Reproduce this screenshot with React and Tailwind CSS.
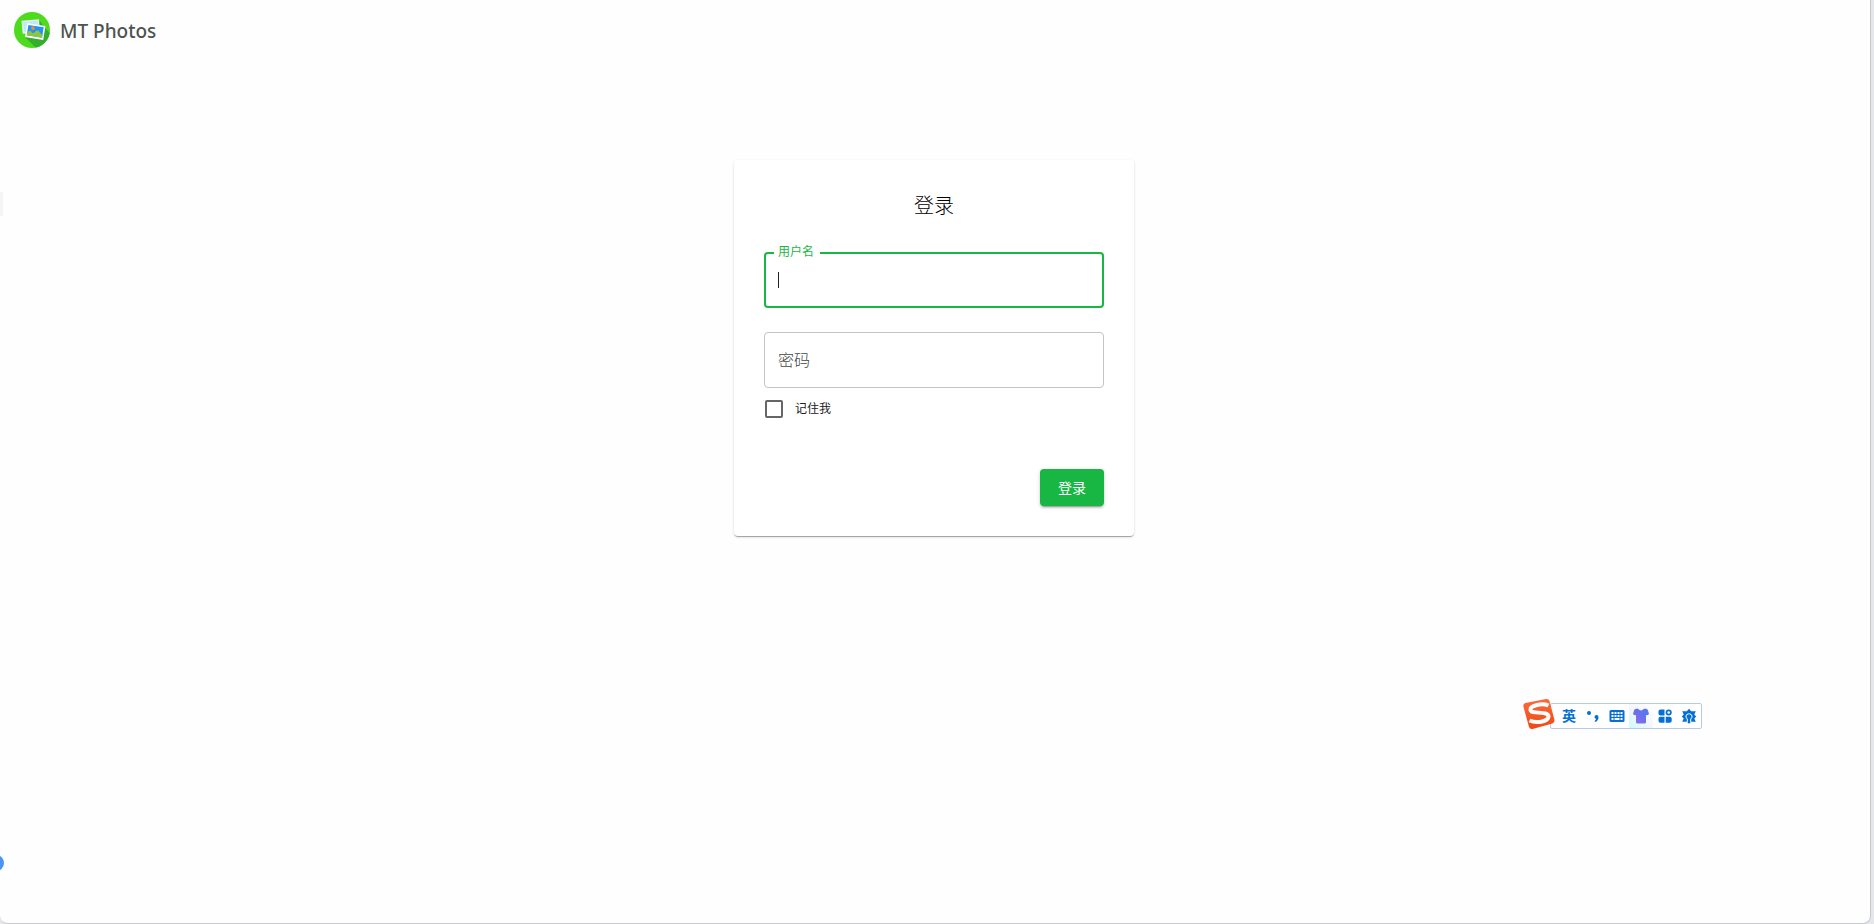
function PhotosLogo() {
  return (
    <svg viewBox="0 0 36 36" className="size-9 shrink-0" aria-hidden="true">
      <defs>
        <clipPath id="disc">
          <circle cx="18" cy="18" r="18" />
        </clipPath>
      </defs>
      <circle cx="18" cy="18" r="18" fill="#4fdb1d" />
      <path d="M26 9 L30 15 L42 27 L30 42 L20 34 L11 25 Z" fill="#33ad2b" clipPath="url(#disc)" />
      <g transform="rotate(-5 16 14)">
        <rect x="8" y="8" width="17.500" height="13" fill="#e6efec" />
        <rect x="9.500" y="9.500" width="14.500" height="10" fill="#b9ecf5" />
        <circle cx="15" cy="12.500" r="1.500" fill="#f3d9bd" />
      </g>
      <g transform="rotate(9 21 19)">
        <rect x="12" y="12.500" width="18.500" height="14" fill="#fff" />
        <rect x="13.500" y="14" width="15.500" height="10.500" fill="#2292f5" />
        <path d="M13.500 21.500 q2.500 -3.500 4.500 -.8 q1.500 1.500 2.500 0 q3 -4.700 5 -1.500 q2 2.300 3.500 2.300 v3 h-15.500 Z" fill="#8cc63f" />
        <circle cx="18.500" cy="16.500" r="1.900" fill="#f58a32" />
      </g>
    </svg>
  );
}

function SogouLogo() {
  return (
    <svg viewBox="0 0 32 32" className="absolute -left-7 -top-1.5 size-8" aria-hidden="true">
      <defs>
        <linearGradient id="sogou" x1="0" y1="0" x2="0" y2="1">
          <stop offset="0" stopColor="#fb6a3c" />
          <stop offset="1" stopColor="#f04a12" />
        </linearGradient>
      </defs>
      <path
        d="M2.500 5 L23 1 Q25.800 .6 26.500 3 L31.500 22 Q31.800 24.800 29.500 25.600 L9.500 31 Q7 31.500 6 29 L.4 8.500 Q0 5.600 2.500 5 Z"
        fill="url(#sogou)"
      />
      <path
        d="M25.500 7.500 C19 4.500 7 7.500 7.500 12 C8 16.500 25.500 12.500 25.500 18.500 C25 24 13 25.500 6.500 22.500"
        fill="none"
        stroke="#fff"
        strokeWidth="4"
      />
    </svg>
  );
}

function PunctuationIcon() {
  return (
    <svg viewBox="0 0 16 16" className="size-4" fill="#066fd6" aria-hidden="true">
      <circle cx="4" cy="5" r="2" />
      <path d="M9.500 9 a2 2 0 1 1 4 0 q0 3.500 -3 5 l-1 -1 q1.500 -1 1.500 -2.200 q-1.500 -.3 -1.500 -1.800 Z" />
    </svg>
  );
}

function KeyboardIcon() {
  return (
    <svg viewBox="0 0 16 16" className="size-4" aria-hidden="true">
      <rect x=".5" y="2" width="15" height="12" rx="1.500" fill="#066fd6" />
      <path
        d="M2.500 4h2v2h-2Zm3 0h2v2h-2Zm3 0h2v2h-2Zm3 0h2v2h-2ZM2.500 7h2v2h-2Zm3 0h2v2h-2Zm3 0h2v2h-2Zm3 0h2v2h-2ZM2.500 10h2v2h-2Zm3 0h5v2h-5Zm6 0h2v2h-2Z"
        fill="#fff"
      />
    </svg>
  );
}

function ShirtIcon() {
  return (
    <svg viewBox="0 0 16 16" className="size-4" aria-hidden="true">
      <defs>
        <linearGradient id="shirt" x1="0" y1="1" x2="1" y2="0">
          <stop offset="0" stopColor="#9a6bd8" />
          <stop offset=".5" stopColor="#6a70ee" />
          <stop offset="1" stopColor="#4b78f5" />
        </linearGradient>
      </defs>
      <path
        d="M3 .8 H5 Q8 4 11 .8 H13 Q14.500 1 15 2.500 L16 6 Q15 7.300 13 7.200 V14 Q13 15.500 11.500 15.500 H4.500 Q3 15.500 3 14 V7.200 Q1 7.300 0 6 L1 2.500 Q1.500 1 3 .8 Z"
        fill="url(#shirt)"
      />
    </svg>
  );
}

function AppsIcon() {
  return (
    <svg viewBox="0 0 16 16" className="size-4" fill="#066fd6" aria-hidden="true">
      <path d="M3.500 1.500 H7.500 V7.500 H3.500 Q1.500 7.500 1.500 5.500 V3.500 Q1.500 1.500 3.500 1.500 Z" />
      <path d="M3.500 8.700 H7.500 V14.700 H3.500 Q1.500 14.700 1.500 12.700 V10.700 Q1.500 8.700 3.500 8.700 Z" />
      <path d="M8.700 8.700 H12.700 Q14.700 8.700 14.700 10.700 V12.700 Q14.700 14.700 12.700 14.700 H8.700 Z" />
      <circle cx="11.700" cy="4.500" r="2.200" fill="none" stroke="#066fd6" strokeWidth="1.700" />
    </svg>
  );
}

function SettingsIcon() {
  return (
    <svg viewBox="0 0 16 16" className="size-4" aria-hidden="true">
      <path
        d="M8 .8 L10.200 3.300 H14.800 L13.300 6.500 L15.200 8.500 L13.300 10.500 L14.800 13.700 H10.200 L8 15.700 L5.800 13.700 H1.200 L2.700 10.500 L.8 8.500 L2.700 6.500 L1.200 3.300 H5.800 Z"
        fill="#066fd6"
      />
      <path
        d="M6.300 14 V11 Q4.800 10 5 8 Q5.400 5.800 8 5.800 Q10.600 5.800 11 8 Q11.200 10 9.700 11 V14"
        fill="none"
        stroke="#fff"
        strokeWidth="1"
      />
      <path d="M7 7 Q8 6 9 7 V15 H7 Z" fill="#066fd6" />
    </svg>
  );
}

function InputMethodBar() {
  return (
    <div
      role="toolbar"
      aria-label="输入法"
      className="fixed right-[172px] bottom-[195px] flex h-[26px] items-center rounded-xs border border-[#b4cbe6] bg-white pl-1.5"
    >
      <SogouLogo />
      <button type="button" className="flex h-6 w-6 items-center justify-center text-sm leading-6 font-bold text-[#066fd6]">英</button>
      <button type="button" aria-label="标点" className="flex h-6 w-6 items-center justify-center"><PunctuationIcon /></button>
      <button type="button" aria-label="键盘" className="flex h-6 w-6 items-center justify-center"><KeyboardIcon /></button>
      <button type="button" aria-label="皮肤" className="flex h-6 w-6 items-center justify-center bg-linear-to-tr from-[#cdfafa] via-[#f4f6ff] to-white"><ShirtIcon /></button>
      <button type="button" aria-label="工具箱" className="flex h-6 w-6 items-center justify-center"><AppsIcon /></button>
      <button type="button" aria-label="设置" className="flex h-6 w-6 items-center justify-center"><SettingsIcon /></button>
    </div>
  );
}

function LoginCard() {
  return (
    <form
      onSubmit={(event) => event.preventDefault()}
      className="flex w-full max-w-[400px] flex-col rounded bg-white px-[30px] pt-8 pb-[30px] shadow-[0_2px_1px_-1px_rgba(0,0,0,0.2),0_1px_1px_0_rgba(0,0,0,0.14),0_1px_3px_0_rgba(0,0,0,0.12)]"
    >
      <h1 className="text-center text-xl leading-7 font-light text-black">登录</h1>

      <div className="relative mt-8 h-14">
        <input
          id="username"
          type="text"
          autoComplete="username"
          className="h-full w-full rounded border-2 border-[#18b643] px-3 text-base caret-transparent outline-none"
        />
        <label htmlFor="username" className="absolute left-2.5 -top-2 bg-white pr-1.5 pl-1 text-xs leading-4 text-[#18b643]">
          用户名
        </label>
        <span className="absolute top-5 left-3.5 h-4 w-px bg-[#212121]" />
      </div>

      <input
        type="password"
        aria-label="密码"
        placeholder="密码"
        autoComplete="current-password"
        className="mt-6 h-14 w-full rounded border border-[#c4c4c4] px-[13px] text-base font-light outline-none placeholder:text-[#444]"
      />

      <label className="mt-3 flex items-center gap-3 pl-px text-xs leading-4">
        <input type="checkbox" className="size-[18px] appearance-none rounded-xs border-2 border-[#666] bg-white checked:bg-[#18b643]" />
        记住我
      </label>

      <button
        type="submit"
        className="mt-[51px] h-[37px] w-16 self-end rounded bg-[#18b643] text-sm text-white shadow-[0_3px_1px_-2px_rgba(0,0,0,0.2),0_2px_2px_0_rgba(0,0,0,0.14),0_1px_5px_0_rgba(0,0,0,0.12)]"
      >
        登录
      </button>
    </form>
  );
}

export default function App() {
  return (
    <div className="min-h-screen bg-[#e6e7eb] pr-[3px] font-['Noto_Sans','Noto_Sans_CJK_SC',sans-serif] text-[#212121]">
      <div className="relative flex min-h-screen flex-col overflow-hidden rounded-b-lg border-r border-b border-[#c8c9cc] bg-[#fefefe]">
        <header className="flex h-[60px] items-center gap-2.5 px-3.5">
          <PhotosLogo />
          <span className="pt-0.5 text-[19px] font-medium text-[#4b544f]">MT Photos</span>
        </header>
        <main className="flex justify-center pt-[100px] pr-0.5">
          <LoginCard />
        </main>
        <span className="absolute top-48 left-0 h-6 w-[3px] bg-[#f4f4f5]" />
        <span className="absolute bottom-[52px] -left-3 size-4 rounded-full bg-[#4a94f8]" />
      </div>
      <InputMethodBar />
    </div>
  );
}
